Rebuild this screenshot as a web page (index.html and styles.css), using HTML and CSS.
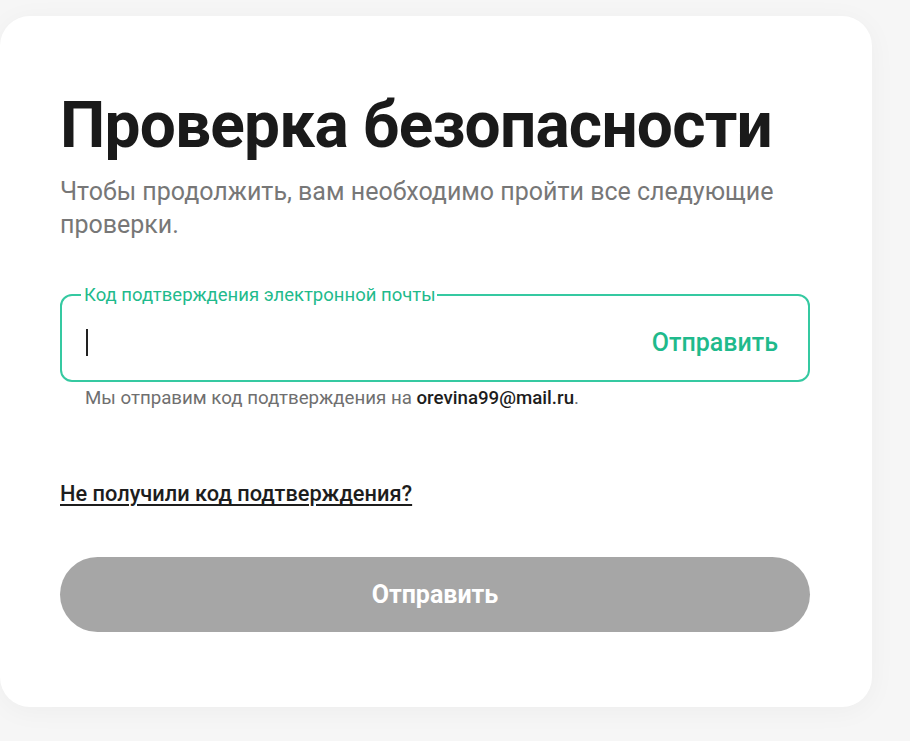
FILE: index.html
```html
<html lang="ru">
<head>
  <meta charset="UTF-8">
  <title>Проверка безопасности</title>
  <link rel="stylesheet" href="styles.css">
</head>
<body>

<div class="card">
  <h1 class="card_title">Проверка безопасности</h1>
  <p class="card_subtitle">Чтобы продолжить, вам необходимо пройти все следующие проверки.</p>

  <fieldset class="code_field">
    <legend class="code_field__label">Код подтверждения электронной почты</legend>
    <div class="code_field__row">
      <span class="code_field__caret"></span>
      <span class="code_field__send">Отправить</span>
    </div>
  </fieldset>
  <p class="code_hint">Мы отправим код подтверждения на <b>orevina99@mail.ru</b>.</p>

  <a class="resend_link" href="#">Не получили код подтверждения?</a>

  <button class="submit_btn" type="button">Отправить</button>
</div>

</body>
</html>
```

FILE: styles.css
```css
* {
  padding: 0;
  margin: 0;
  box-sizing: border-box;
}

body {
  margin: 0;
  min-height: 100vh;
  background: #f6f6f6;
  font-family: Roboto, "Liberation Sans", sans-serif;
  color: #1d1d1d;
}

.card {
  width: 872px;
  margin-top: 16px;
  padding: 72px 62px 75px 60px;
  background: #ffffff;
  border-radius: 30px;
  box-shadow: 0 4px 28px rgba(0, 0, 0, 0.04);
}

.card_title {
  font-size: 64px;
  font-weight: 700;
  line-height: 76px;
  letter-spacing: -0.8px;
  color: #1a1a1a;
}

.card_subtitle {
  margin-top: 11px;
  width: 750px;
  font-size: 25px;
  line-height: 33px;
  color: #777777;
}

.code_field {
  margin-top: 43px;
  height: 98px;
  border: 2px solid #35c9a1;
  border-radius: 12px;
  padding: 0 30px 0 19px;
}

.code_field__label {
  padding: 0 1px 0 3px;
  font-size: 18.5px;
  line-height: 22px;
  color: #1fba8c;
}

.code_field__row {
  display: flex;
  align-items: center;
  justify-content: space-between;
  height: 72px;
  padding-left: 5px;
}

.code_field__caret {
  width: 1.5px;
  height: 27px;
  background: #222;
}

.code_field__send {
  font-size: 25px;
  font-weight: 500;
  color: #1fba8c;
}

.code_hint {
  margin-top: 5px;
  padding-left: 25px;
  font-size: 18.7px;
  line-height: 22px;
  color: #6f6f6f;
}

.code_hint b {
  font-weight: 500;
  color: #1d1d1d;
}

.resend_link {
  display: inline-block;
  margin-top: 72px;
  font-size: 21.8px;
  font-weight: 500;
  line-height: 26px;
  color: #1d1d1d;
  text-decoration: underline;
  text-underline-offset: 3px;
}

.submit_btn {
  display: block;
  width: 750px;
  height: 75px;
  margin-top: 50px;
  border: none;
  border-radius: 38px;
  background: #a6a6a6;
  color: #ffffff;
  font-family: Roboto, "Liberation Sans", sans-serif;
  font-size: 25px;
  font-weight: 700;
}
```
